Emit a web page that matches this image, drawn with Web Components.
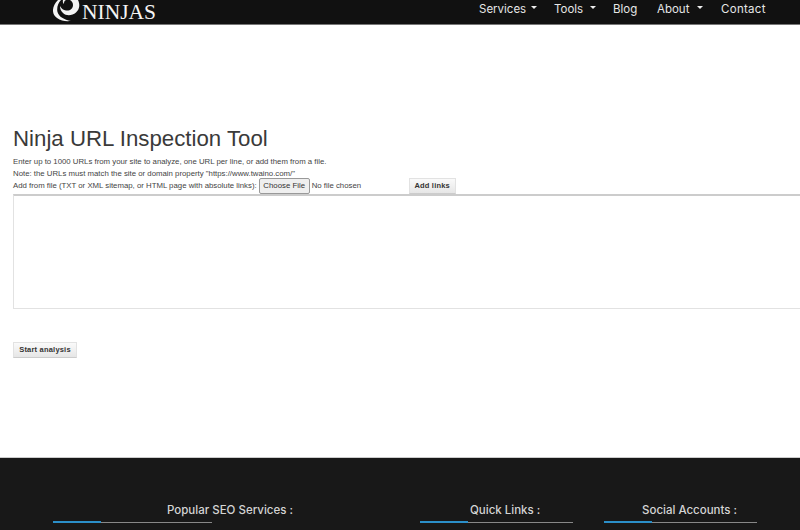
<!DOCTYPE html>
<html>
<head>
<meta charset="utf-8">
<title>Ninja URL Inspection Tool</title>
<style>
  html, body { margin: 0; padding: 0; background: #fff; overflow: hidden; }
  body { width: 800px; height: 530px; display: flex; flex-direction: column; font-family: "Liberation Sans", Arial, sans-serif; }
</style>
</head>
<body>
<site-header></site-header>
<inspection-tool></inspection-tool>
<site-footer>
  <footer-column title="Popular SEO Services :" width="159" indent="114" style="margin-left:53px"></footer-column>
  <footer-column title="Quick Links :" width="153" indent="50" style="margin-left:208px"></footer-column>
  <footer-column title="Social Accounts :" width="153" indent="38" style="margin-left:31px"></footer-column>
</site-footer>

<script>
class NavItem extends HTMLElement {
  connectedCallback() {
    const caret = this.hasAttribute("menu") ? `<span class="caret"></span>` : "";
    this.attachShadow({ mode: "open" }).innerHTML = `
    <style>
      :host { display: flex; align-items: center; justify-content: space-between; color: #e6e6e6; white-space: nowrap; }
      .caret { width: 0; height: 0; border-left: 3.5px solid transparent; border-right: 3.5px solid transparent; border-top: 3.5px solid #eee; margin-top: -2px; }
    </style>
    <slot></slot>${caret}`;
  }
}

class SiteHeader extends HTMLElement {
  connectedCallback() {
    this.attachShadow({ mode: "open" }).innerHTML = `
    <style>
      :host { display: flex; flex: none; height: 24px; background: #111; border-bottom: 1px solid #777; overflow: hidden; justify-content: space-between; }
      .logo { display: flex; margin-left: 53px; height: 24px; color: #f4f4f4; font: 21.500px/24px "Liberation Serif", serif; }
      .logo svg { flex: none; width: 28px; height: 24px; }
      .logo span { display: block; margin-left: 1px; }
      nav { display: flex; align-items: center; margin-right: 35px; font: 400 11.5px "Inter", "Open Sans", sans-serif; padding-bottom: 7px; }
      nav-item:nth-child(1) { width: 58px; margin-right: 17px; }
      nav-item:nth-child(2) { width: 42px; margin-right: 17px; }
      nav-item:nth-child(3) { width: 25px; margin-right: 19px; }
      nav-item:nth-child(4) { width: 46px; margin-right: 18px; }
      nav-item:nth-child(5) { width: 44px; letter-spacing: .3px; }
    </style>
    <div class="logo">
      <svg viewBox="53 0 28 24">
        <path fill="#f4f4f4" d="M58 0C52 6 51 14 57 18C61 21 66 21.500 71 21C64 19.500 59 17 57.500 12C56.500 8 58 3 61 0Z"/>
        <path fill="#f4f4f4" fill-rule="evenodd" d="M63 0H78C80 4 80 9 76 12.500C72 16 66 16 63 13C61 11 60 9 60 6C62 9 63 10 66 10.500C70 11 73 8.500 73 5C73 3 72 1 70 0H66C64 1 64 2 64 4C63 3 62.500 1.500 63 0Z"/>
      </svg>
      <span>NINJAS</span>
    </div>
    <nav>
      <nav-item menu>Services</nav-item>
      <nav-item menu>Tools</nav-item>
      <nav-item>Blog</nav-item>
      <nav-item menu>About</nav-item>
      <nav-item>Contact</nav-item>
    </nav>`;
  }
}

class InspectionTool extends HTMLElement {
  connectedCallback() {
    this.attachShadow({ mode: "open" }).innerHTML = `
    <style>
      :host { display: block; flex: 1; min-height: 0; padding: 101px 0 0 13px; color: #444; font: 7.8px/12px "Liberation Sans", Arial, sans-serif; overflow: hidden; }
      h1 { margin: 0 0 4px; font: 400 22.25px/26px "Liberation Sans", Arial, sans-serif; color: #3a3a3a; }
      p { margin: 0; }
      .row { display: flex; align-items: center; height: 16px; margin-top: -2px; }
      .choose { margin-left: 2px; width: 51px; height: 16px; box-sizing: border-box; border: 1px solid #999; border-radius: 2px; background: #efefef; color: #333; text-align: center; line-height: 14px; }
      .none { margin-left: 2px; width: 97px; }
      .btn { display: flex; align-items: center; justify-content: center; box-sizing: border-box; height: 16px; border: 1px solid #e2e2e2; border-bottom-color: #ccc; background: linear-gradient(#fafafa, #e6e6e6); font-weight: 700; font-size: 7.5px; color: #333; letter-spacing: .2px; }
      .add { width: 47px; }
      .start { width: 64px; margin-top: 33px; }
      .area { width: 100%; height: 115px; box-sizing: border-box; border: 1px solid #e2e2e2; border-right: 0; border-top: 2px solid #ccc; }
    </style>
    <h1>Ninja URL Inspection Tool</h1>
    <p>Enter up to 1000 URLs from your site to analyze, one URL per line, or add them from a file.</p>
    <p>Note: the URLs must match the site or domain property "https://www.twaino.com/"</p>
    <div class="row">
      <p>Add from file (TXT or XML sitemap, or HTML page with absolute links):</p>
      <div class="choose">Choose File</div>
      <div class="none">No file chosen</div>
      <div class="btn add">Add links</div>
    </div>
    <div class="area"></div>
    <div class="btn start">Start analysis</div>`;
  }
}

class FooterColumn extends HTMLElement {
  connectedCallback() {
    const title = this.getAttribute("title");
    const width = this.getAttribute("width");
    const indent = this.getAttribute("indent");
    this.attachShadow({ mode: "open" }).innerHTML = `
    <style>
      :host { display: block; flex: none; width: ${width}px; color: #d4d4d4; }
      h4 { margin: 0; font: 500 11.5px/16px "Inter", "Open Sans", sans-serif; padding: 0 0 4px ${indent}px; white-space: nowrap; border-bottom: 1px solid #888; position: relative; }
      h4::after { content: ""; position: absolute; left: 0; bottom: -1px; width: 48px; height: 2px; background: #2b8fc9; }
    </style>
    <h4>${title}</h4>`;
  }
}

class SiteFooter extends HTMLElement {
  connectedCallback() {
    this.attachShadow({ mode: "open" }).innerHTML = `
    <style>
      :host { display: flex; flex: none; height: 73px; box-sizing: border-box; padding-top: 44px; background: #181818; border-top: 1px solid #ccc; overflow: hidden; }
    </style>
    <slot></slot>`;
  }
}

customElements.define("nav-item", NavItem);
customElements.define("site-header", SiteHeader);
customElements.define("inspection-tool", InspectionTool);
customElements.define("footer-column", FooterColumn);
customElements.define("site-footer", SiteFooter);
</script>
</body>
</html>
